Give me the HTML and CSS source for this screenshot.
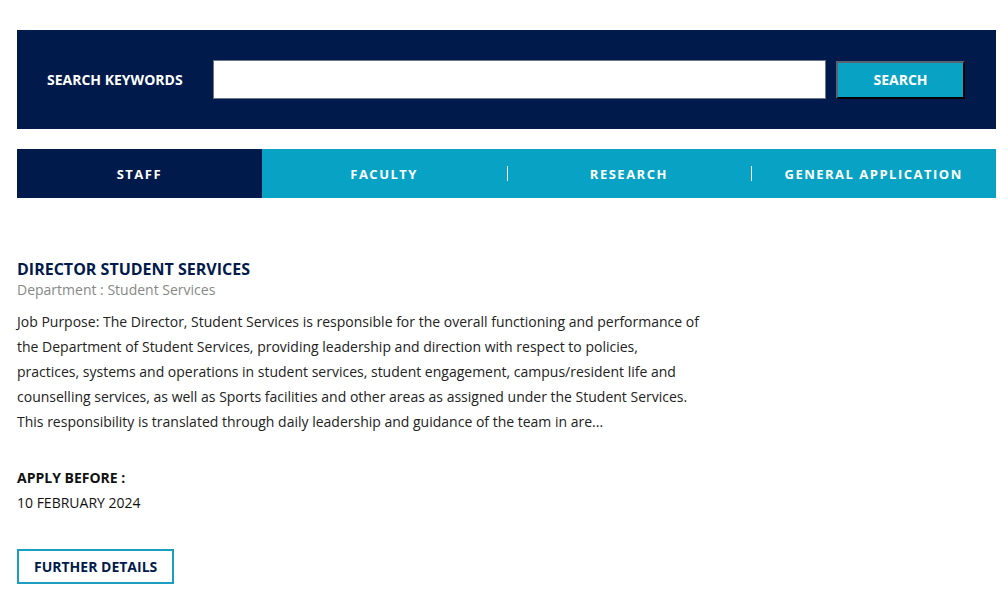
FILE: index.html
```html
<!DOCTYPE html>
<html lang="en">
<head>
    <meta charset="UTF-8">
    <meta name="viewport" content="width=device-width, initial-scale=1.0">
    <title>Careers</title>
    <link rel="stylesheet" href="styles.css">
</head>
<body>
    <div class="container">
        <form class="search-bar">
            <label for="keywords">Search Keywords</label>
            <input type="text" id="keywords">
            <button type="submit">Search</button>
        </form>

        <nav class="tabs">
            <a href="#" class="tab active">Staff</a>
            <a href="#" class="tab">Faculty</a>
            <a href="#" class="tab sep">Research</a>
            <a href="#" class="tab sep">General Application</a>
        </nav>

        <div class="job">
            <h2>Director Student Services</h2>
            <p class="dept">Department : Student Services</p>
            <p class="desc">Job Purpose: The Director, Student Services is responsible for the overall functioning and performance of the Department of Student Services, providing leadership and direction with respect to policies, practices, systems and operations in student services, student engagement, campus/resident life and counselling services, as well as Sports facilities and other areas as assigned under the Student Services. This responsibility is translated through daily leadership and guidance of the team in are...</p>

            <h4>Apply Before :</h4>
            <p class="date">10 February 2024</p>

            <a href="#" class="details-btn">Further Details</a>
        </div>
    </div>
</body>
</html>
```

FILE: styles.css
```css
body {
    font-family: "Open Sans", Arial, sans-serif;
    margin: 0;
    padding: 0;
    background-color: #ffffff;
    color: #111;
}

.container {
    padding: 30px 7px 0 17px;
}

.search-bar {
    display: flex;
    align-items: center;
    height: 99px;
    padding: 0 31px 0 30px;
    box-sizing: border-box;
    background-color: #001b4b;
}

.search-bar label {
    color: #fff;
    font-size: 14px;
    font-weight: 700;
    text-transform: uppercase;
    width: 166px;
}

.search-bar input {
    flex: 1;
    height: 39px;
    box-sizing: border-box;
    border: 1px solid #6c7685;
    background: #fff;
    margin-right: 10px;
}

.search-bar button {
    width: 129px;
    height: 38px;
    padding: 0;
    background-color: #08a3c4;
    color: #fff;
    font-family: inherit;
    font-size: 14px;
    font-weight: 700;
    text-transform: uppercase;
    border: 2px outset #5a6370;
    border-right-color: #0a0f18;
    border-bottom-color: #0a0f18;
}

.tabs {
    display: grid;
    grid-template-columns: repeat(4, 1fr);
    margin-top: 20px;
    height: 49px;
    background-color: #08a3c4;
}

.tab {
    display: flex;
    align-items: center;
    justify-content: center;
    position: relative;
    color: #fff;
    font-size: 13px;
    font-weight: 700;
    letter-spacing: 1.5px;
    text-transform: uppercase;
    text-decoration: none;
}

.tab.active {
    background-color: #001b4b;
}

.tab.sep::before {
    content: "";
    position: absolute;
    left: 0;
    top: 17px;
    height: 15px;
    border-left: 1px solid #fff;
}

.job {
    padding-top: 60px;
    max-width: 685px;
}

.job h2 {
    margin: 0;
    font-size: 16px;
    font-weight: 700;
    color: #001b4b;
    text-transform: uppercase;
    line-height: 22px;
}

.dept {
    margin: 0;
    font-size: 14px;
    color: #888;
    line-height: 20px;
}

.desc {
    margin: 9px 0 0;
    font-size: 14px;
    line-height: 25px;
    color: #222;
}

.job h4 {
    margin: 31px 0 0;
    font-size: 14px;
    font-weight: 700;
    text-transform: uppercase;
    line-height: 25px;
}

.date {
    margin: 0;
    font-size: 14px;
    line-height: 25px;
    text-transform: uppercase;
}

.details-btn {
    display: inline-block;
    margin-top: 34px;
    padding: 0 15px;
    height: 35px;
    line-height: 31px;
    box-sizing: border-box;
    border: 2px solid #1a9fc0;
    color: #001b4b;
    font-size: 14px;
    font-weight: 700;
    text-transform: uppercase;
    text-decoration: none;
}
```
